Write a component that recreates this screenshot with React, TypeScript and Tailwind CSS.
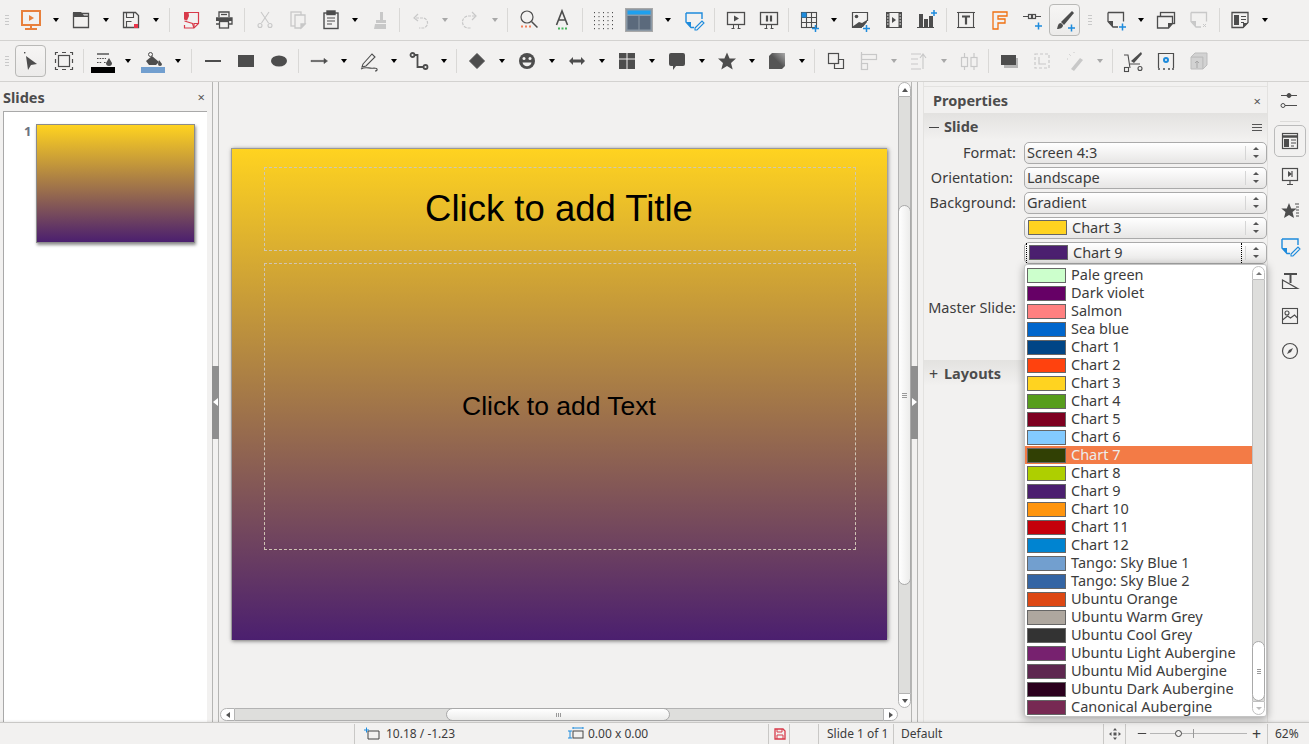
import React from "react";

const D = "#4d4d4d";
const L = "#c8c8c8";
const B = "#1e8bdc";
const icons: Record<string, React.ReactNode> = {
  present: (<g fill="none" stroke="#e8803c" strokeWidth="2"><rect x="3" y="3" width="18" height="14" /><path d="M12 17v3M6 21h12" /><path d="M10 7l5 3-5 3z" fill="#e8803c" stroke="none" /></g>),
  open: (<g><path d="M4.500 5.500h15v14h-15z" fill="none" stroke={D} strokeWidth="1.300" /><path d="M4 4h8l3 3.500h5V9H4z" fill={D} /></g>),
  save: (<g><path d="M4.500 4.500h12l3 3v12h-15z" fill="none" stroke={D} strokeWidth="1.300" /><path d="M7.500 4.500v5h7v-5M7.500 19.500v-6h5" fill="none" stroke={D} strokeWidth="1.100" /><rect x="15" y="16" width="4" height="4" fill="#e8354a" /></g>),
  pdf: (<g fill="none" stroke="#d83a4a" strokeWidth="1.200"><path d="M9 4.500h10.500v11l-4.500 4.500H5.500v-3" /><path d="M5 4h4.500l.5 4-2 4.500-3-1z" fill="#d83a4a" stroke="none" /><path d="M5.500 13l8 2.500 1.500 4.500" /><path d="M15 20v-4.500h4.500" /></g>),
  print: (<g fill="none" stroke={D} strokeWidth="1.300"><path d="M7 9V4h10v5" /><path d="M9 6.500h6" /><path d="M4 10h16v6h-3M7 16H4z" /><path d="M4 10h16v3H4z" fill={D} stroke="none" /><rect x="7.500" y="13.500" width="9" height="6.500" fill="#f2f1f0" /></g>),
  cut: (<g fill="none" stroke={L} strokeWidth="1.100"><path d="M8 4l7.500 11M16 4L8.500 15" /><circle cx="7" cy="17.500" r="2" /><circle cx="17" cy="17.500" r="2" /></g>),
  copy: (<g fill="none" stroke={L} strokeWidth="1.300"><rect x="5" y="4" width="10" height="14" /><path d="M9 7h10v9l-4 4H9z" fill="#f2f1f0" /><path d="M15 20v-4h4z" fill={L} /></g>),
  paste: (<g fill="none" stroke={D} strokeWidth="1.400"><rect x="5" y="5" width="14" height="15.500" /><rect x="8" y="3" width="8" height="3.500" fill={D} /><path d="M8 10h8M8 13h8M8 16h5" strokeWidth="1.200" /></g>),
  clone: (<g fill={L}><rect x="13" y="4" width="3" height="8" /><path d="M9 12h10v3H9zM8 16h11v5H7z" /></g>),
  undo: (<g fill="none" stroke={L} strokeWidth="1.200"><path d="M8 10h6a5 5 0 0 1 1 10h-4" strokeDasharray="3 1" /><path d="M10 6L6 10l4 3" /></g>),
  redo: (<g fill="none" stroke={L} strokeWidth="1.200"><path d="M17 8h-6a6 6 0 0 0-1 12h3" strokeDasharray="3 1" /><path d="M14 4l4 4-4 4" /></g>),
  find: (<g fill="none" stroke={D} strokeWidth="1.200"><circle cx="10" cy="9" r="6" /><path d="M14.500 13.500L20.500 19.500" strokeWidth="1.500" /><path d="M4 18.500h2M8 18.500h2M12 18.500h2" stroke="#f0805a" strokeWidth="1.800" /></g>),
  spell: (<g fill="none" stroke={D} strokeWidth="1.600"><path d="M6.500 17l5.500-14 5.500 14M8.500 12h7" /><path d="M8 20.500h2M11.500 20.500h2M15 20.500h2" stroke="#45b45a" strokeWidth="1.800" /></g>),
  grid: (<g fill={D}>{[3, 7.500, 12, 16.500, 21].flatMap((x) => [4, 8, 12, 16, 20].map((y) => <rect key={x + "-" + y} x={x} y={y} width="1" height="1.200" />))}</g>),
  layoutBig: (<g><rect x="0.500" y="0.500" width="27" height="23" fill="#8c99a5" stroke="#a9a9a9" /><rect x="2.500" y="2.500" width="23" height="4" fill="#1ea0ee" /><rect x="2.500" y="8" width="11" height="13.500" fill="#5b6a7c" /><rect x="14.500" y="8" width="11" height="13.500" fill="#5b6a7c" /></g>),
  note: (<g fill="none" stroke={B} strokeWidth="1.400"><path d="M4 5h16v6M4 5v9l5 5.500h3" /><path d="M4 14h5v5.500z" fill={B} stroke="none" /><path d="M13 20l7-7 2 2-7 7h-2z" strokeWidth="1.100" /></g>),
  start: (<g fill="none" stroke={D} strokeWidth="1.300"><rect x="3.500" y="4.500" width="17" height="12" /><path d="M10 7.500l5 3-5 3z" fill={D} stroke="none" /><path d="M9.500 17v3M14.500 17v3M7.500 20.500h3M13.500 20.500h3" strokeWidth="1" /></g>),
  pause: (<g fill="none" stroke={D} strokeWidth="1.300"><rect x="3.500" y="4.500" width="17" height="12" /><path d="M10 7.500v6M14 7.500v6" strokeWidth="2.200" /><path d="M9.500 17v3M14.500 17v3M7.500 20.500h3M13.500 20.500h3" strokeWidth="1" /></g>),
  table: (<g fill="none" stroke={D} strokeWidth="1.100"><rect x="4.500" y="4.500" width="15" height="15" /><path d="M4.500 9.500h15M4.500 14.500h15M9.500 4.500v15M14.500 4.500v15" /><rect x="4.500" y="4.500" width="5" height="5" fill={B} stroke="none" /><path d="M15 20.500h7M18.500 17v7" stroke={B} strokeWidth="1.500" /></g>),
  image: (<g fill="none" stroke={D} strokeWidth="1.200"><path d="M14 19.500H4.500v-15h15V13" /><circle cx="8.500" cy="8.500" r="1.800" fill={D} stroke="none" /><path d="M4 19l7-5 3 1 5-3v2l-4 5z" fill={D} stroke="none" /><path d="M15 20.500h7M18.500 17v7" stroke={B} strokeWidth="1.500" /></g>),
  video: (<g><rect x="4" y="4" width="16" height="16" fill={D} /><rect x="7.500" y="5" width="9" height="14" fill="#f2f1f0" /><path d="M10 9l4 3-4 3z" fill={D} /><path d="M5 7h1.500M5 10h1.500M5 13h1.500M5 16h1.500M17.500 7H19M17.500 10H19M17.500 13H19M17.500 16H19" stroke="#f2f1f0" /></g>),
  chart: (<g><rect x="4" y="6" width="4" height="13" fill={D} /><rect x="9" y="11" width="4" height="8" fill={D} /><rect x="14" y="8" width="4" height="11" fill={D} /><path d="M2 19.500h17" stroke={D} /><path d="M16 5h6M19 2v6" stroke={B} strokeWidth="1.500" /></g>),
  text: (<g fill="none" stroke={D} strokeWidth="1.100"><rect x="4.500" y="4.500" width="15" height="15" /><path d="M8 8.500h8M12 8.500v8" strokeWidth="2.200" /><path d="M3 4.500h3M18 4.500h3M3 19.500h3M18 19.500h3" /></g>),
  fontwork: (<path d="M6 4h14v4h-9v3h7v4h-7v6H6z" fill="none" stroke="#f07010" strokeWidth="1.300" />),
  link: (<g fill="none" stroke={D} strokeWidth="1.200"><rect x="8.500" y="6.500" width="3" height="4" /><rect x="12.500" y="6.500" width="3" height="4" /><path d="M3 8.500h5M16 8.500h5" /><path d="M15 18h7M18.500 14.500v7" stroke={B} strokeWidth="1.500" /></g>),
  brush: (<g><path d="M8 14L19 3l2 2-10 12z" fill={D} /><path d="M4 21c1-3 1-6 4-6l2 2c0 3-3 4-6 4z" fill={D} /><path d="M15 20h7M18.500 16.500v7" stroke={B} strokeWidth="1.500" /></g>),
  slideNew: (<g fill="none" stroke={D} strokeWidth="1.300"><path d="M4 4.500h15.500v9M4 4.500v9l5 5.500h5" /><path d="M4 13h5v6z" fill={D} stroke="none" /><path d="M15 19h7M18.500 15.500v7" stroke={B} strokeWidth="1.500" /></g>),
  slideDup: (<g fill="none" stroke={D} strokeWidth="1.300"><rect x="6.500" y="4.500" width="14" height="11" /><path d="M3.500 8.500h15v7l-4 4.500h-11z" fill="#f2f1f0" /><path d="M14 20v-5h5z" fill={D} stroke="none" /></g>),
  slideDel: (<g fill="none" stroke={L} strokeWidth="1.300"><path d="M4 4.500h15.500v9M4 4.500v9l5 5.500h5" /><path d="M4 13h5v6z" fill={L} stroke="none" /><path d="M16 16l3 3M19 16l-3 3" strokeWidth="1" /></g>),
  slideLay: (<g fill="none" stroke={D} strokeWidth="1.300"><path d="M4 4.500h16v10l-5 5H4z" /><rect x="6" y="7" width="5" height="10" fill={D} stroke="none" /><path d="M13 8.500h5M13 11.500h5M13 14.500h3" strokeWidth="1.200" /><path d="M15 20v-5h5z" fill={D} stroke="none" /></g>),
  select: (<g><path d="M7 7l11 8-6 1-3 5z" fill={D} /><rect x="5" y="3" width="1.400" height="1.400" fill={D} /></g>),
  points: (<g fill="none" stroke={D} strokeWidth="1.200"><rect x="6.500" y="6.500" width="11" height="11" /><path d="M3.500 6V3.500H6M18 3.500h2.500V6M3.500 18v2.500H6M18 20.500h2.500V18M10 3.500h4M10 20.500h4M3.500 10v4M20.500 10v4" /></g>),
  lineColor: (<g><path d="M6 5h12" stroke={D} strokeWidth="1.400" /><path d="M6 9.500h9M6 13.500h5M13 13.500h2" stroke={D} strokeDasharray="1.600 1" strokeWidth="1.200" /><path d="M18 9l3 5a3 3 0 1 1-6 0z" fill={D} /><rect x="0" y="18" width="24" height="6" fill="#000" /></g>),
  fillColor: (<g><path d="M5 12l6-5 7 6-3 3H8z" fill={D} /><circle cx="9.500" cy="5.500" r="2" fill="none" stroke={D} /><path d="M18 11l3 4a2 2 0 1 1-4 0z" fill={D} /><rect x="0" y="18" width="24" height="6" fill="#729fcf" /></g>),
  line: (<path d="M4 12h16" stroke={D} strokeWidth="2" />),
  rect: (<rect x="4" y="6" width="16" height="12" fill={D} />),
  ellipse: (<ellipse cx="12" cy="12" rx="8" ry="5.500" fill={D} />),
  arrow: (<path d="M4 11.400h13v-2l3.500 2.600-3.500 2.600v-2H4z" fill={D} stroke={D} strokeWidth=".6" />),
  pencil: (<g fill="none" stroke={D} strokeWidth="1.100"><path d="M6 15L15 5l3 3-9 9-4 1z" /><path d="M4 20c5-3 8 0 13-1 4 0 4 3 1 3" /></g>),
  connector: (<g fill="none" stroke={D} strokeWidth="1.800"><circle cx="5.500" cy="6" r="2" /><circle cx="18.500" cy="18" r="2" /><path d="M7.500 6h3v12h6" /></g>),
  diamond: (<path d="M12 4.500l7.500 7.500-7.500 7.500L4.500 12z" fill={D} stroke={D} strokeLinejoin="round" />),
  smile: (<g><circle cx="12" cy="12" r="8" fill={D} /><circle cx="9" cy="9.500" r="1.500" fill="#f2f1f0" /><circle cx="15" cy="9.500" r="1.500" fill="#f2f1f0" /><path d="M7.500 13.500h9c-1 5-8 5-9 0z" fill="#f2f1f0" /></g>),
  dbl: (<path d="M4 12l4-4v2.500h8V8l4 4-4 4v-2.500H8V16z" fill={D} />),
  flow: (<g fill={D}><rect x="4" y="4" width="7.500" height="5.500" /><rect x="12.500" y="4" width="7.500" height="5.500" /><rect x="4" y="10.500" width="7.500" height="9.500" /><rect x="12.500" y="10.500" width="7.500" height="9.500" /></g>),
  callout: (<path d="M6 4h12a2 2 0 0 1 2 2v9a2 2 0 0 1-2 2h-7l-3 4v-4H6a2 2 0 0 1-2-2V6a2 2 0 0 1 2-2z" fill={D} />),
  star: (<path d="M12 3.500l2.600 6h6.400l-5 4.500 1.700 6.500-5.700-3.500-5.700 3.500L8 14 3 9.500h6.400z" fill={D} />),
  cube: (<g><defs><linearGradient id="cb" x1="0" y1="1" x2="1" y2="0"><stop offset=".5" stopColor="#555" /><stop offset="1" stopColor="#aaa" /></linearGradient></defs><path d="M4 7l3-3h13v13l-3 3H4z" fill="url(#cb)" /></g>),
  trans: (<g fill="none" stroke={D} strokeWidth="1.200"><rect x="4.500" y="4.500" width="10" height="10" /><path d="M14.500 10.500h5v9h-9v-5h4z" /></g>),
  align: (<g fill="none" stroke={L} strokeWidth="1.200"><path d="M4.500 3v18" /><rect x="4.500" y="5.500" width="15" height="5" /><rect x="4.500" y="14.500" width="6" height="6" /></g>),
  arrange: (<g fill="none" stroke={L} strokeWidth="1.100"><path d="M4 5h10M4 10h7M4 15h7M4 20h10" /><path d="M16 20V6M13 9l3-4 3 4" /></g>),
  dist: (<g fill="none" stroke={L} strokeWidth="1.200"><rect x="4.500" y="8.500" width="6" height="9" /><rect x="14" y="8.500" width="6" height="9" /><path d="M7.500 4v4M17 4v4M7.500 18v3M17 18v3" /></g>),
  shadow: (<g><rect x="7" y="9" width="14" height="10" fill="#b5b5b5" /><rect x="4" y="6" width="15" height="10" fill={D} /></g>),
  crop: (<g fill="none" stroke={L} strokeWidth="1.200"><rect x="5" y="5" width="14" height="14" strokeDasharray="3 2" /><path d="M9 8v7h7" /></g>),
  wand: (<g><path d="M8 20l9-11 3 2-9 11z" fill={L} /><path d="M6 5l2 2M11 3v2M4 10h2" stroke={L} strokeDasharray="1 1" /></g>),
  editPts: (<g fill="none" stroke={D} strokeWidth="1.100"><path d="M3 6h4l2 13M9 15h10" /><rect x="3.500" y="18.500" width="4" height="4" /><circle cx="19" cy="19.500" r="2" /><path d="M10 12L20 3l1 2-8 9z" fill={D} stroke="none" /></g>),
  glue: (<g fill="none" stroke={D} strokeWidth="1.200"><path d="M4.500 19V4.500h15V19" /><path d="M4 20h2M9 20h2M14 20h2M18 20h2" strokeWidth="1.500" /><circle cx="12" cy="11" r="2" stroke={B} strokeWidth="2" /></g>),
  extr: (<g fill="#d2d2d2" stroke="#bdbdbd"><path d="M4 8h12v12H4z" /><path d="M4 8l4-4h12v12l-4 4V8z" /><path d="M10 19v-7M8 14l2-2 2 2" fill="none" stroke="#a8a8a8" /></g>),
  setTab: (<g fill="none" stroke={D} strokeWidth="1"><path d="M3 7.500h16M3 17.500h16" /><circle cx="11" cy="7.500" r="2" fill={D} /><circle cx="5" cy="17.500" r="2" fill="#f2f1f0" /></g>),
  propTab: (<g fill="none" stroke={D} strokeWidth="1.200"><rect x="4.500" y="4.500" width="15" height="15" /><path d="M4.500 7.500h15" strokeWidth="2.500" /><rect x="6" y="10" width="5" height="8" fill={D} stroke="none" /><path d="M13 11h5M13 14h5M13 17h3" /></g>),
  transTab: (<g fill="none" stroke={D} strokeWidth="1.200"><rect x="4.500" y="4.500" width="15" height="12" /><path d="M10 7l4 3-4 3z" fill={D} stroke="none" /><path d="M14 7v6" /><path d="M12 17v3M9 20.500h6" /></g>),
  galTab: (<g><path d="M11 4l2.200 5.500h5.500L14.500 13l1.500 6-5-3-5 3 1.500-6-4.200-3.500h5.500z" fill={D} /><path d="M17 5h4M18 8h3M18 11h3M18 14h3M18 17h3" stroke={D} /></g>),
  noteTab: (<g fill="none" stroke={B} strokeWidth="1.400"><path d="M4 5h16v6M4 5v9l5 5.500h3" /><path d="M4 14h5v5.500z" fill={B} stroke="none" /><path d="M13 20l7-7 2 2-7 7h-2z" strokeWidth="1.100" /></g>),
  styleTab: (<g fill="none" stroke={D} strokeWidth="1.200"><path d="M6 5h13M12.500 5v9" strokeWidth="2" /><path d="M4.500 19.500h15L4.500 11z" /></g>),
  picTab: (<g fill="none" stroke={D} strokeWidth="1.100"><rect x="4.500" y="4.500" width="15" height="15" /><circle cx="9" cy="9" r="2" /><path d="M4.500 16l5-4 3 2 4-3 3 3" /></g>),
  navTab: (<g fill="none" stroke={D} strokeWidth="1.200"><circle cx="12" cy="12" r="7.500" /><path d="M9 15l2-4 4-2-2 4z" fill={D} stroke="none" /></g>),
};

function Icon({ n, s = 24 }: { n: string; s?: number }) {
  return (
    <svg width={s} height={24} viewBox={`0 0 ${s} 24`} className="block shrink-0">
      {icons[n]}
    </svg>
  );
}

type Item = { n?: string; w?: string; dd?: string; off?: boolean; a?: boolean; sep?: string; handle?: string; big?: boolean };

const row1: Item[] = [
  { handle: "w-[14px]" },
  { n: "present", dd: "w-[17px]" }, { n: "open", dd: "w-[17px]" }, { n: "save", dd: "w-[17px]" },
  { sep: "w-[10px]" }, { n: "pdf" }, { n: "print" },
  { sep: "w-[8px]" }, { n: "cut" }, { n: "copy" }, { n: "paste", dd: "w-[15px]" }, { n: "clone" },
  { sep: "w-[8px]" }, { n: "undo", dd: "w-[17px]", off: true }, { n: "redo", dd: "w-[17px]", off: true },
  { sep: "w-[9px]" }, { n: "find" }, { n: "spell" },
  { sep: "w-[8px]" }, { n: "grid" }, { n: "layoutBig", w: "w-[40px]", dd: "w-[18px]", big: true }, { n: "note" },
  { sep: "w-[9px]" }, { n: "start" }, { n: "pause" },
  { sep: "w-[7px]" }, { n: "table", dd: "w-[17px]" }, { n: "image", w: "w-[35px]" }, { n: "video" }, { n: "chart" },
  { sep: "w-[6px]" }, { n: "text" }, { n: "fontwork" }, { n: "link" }, { n: "brush", a: true },
  { handle: "w-[18px]" },
  { n: "slideNew", dd: "w-[17px]" }, { n: "slideDup" }, { n: "slideDel" },
  { sep: "w-[8px]" }, { n: "slideLay", dd: "w-[17px]" },
];
const row2: Item[] = [
  { handle: "w-[14px]" },
  { n: "select", a: true }, { n: "points" },
  { sep: "w-[6px]" }, { n: "lineColor", dd: "w-[17px]" }, { n: "fillColor", dd: "w-[17px]" },
  { sep: "w-[10px]" }, { n: "line" }, { n: "rect" }, { n: "ellipse" },
  { sep: "w-[7px]" }, { n: "arrow", dd: "w-[17px]" }, { n: "pencil", dd: "w-[17px]" }, { n: "connector", dd: "w-[17px]" },
  { sep: "w-[8px]" }, { n: "diamond", dd: "w-[17px]" }, { n: "smile", dd: "w-[17px]" }, { n: "dbl", dd: "w-[17px]" }, { n: "flow", dd: "w-[17px]" }, { n: "callout", dd: "w-[17px]" }, { n: "star", dd: "w-[17px]" }, { n: "cube", dd: "w-[17px]" },
  { sep: "w-[9px]" }, { n: "trans" }, { n: "align", dd: "w-[17px]", off: true }, { n: "arrange", dd: "w-[17px]", off: true }, { n: "dist" },
  { sep: "w-[7px]" }, { n: "shadow" }, { n: "crop" }, { n: "wand", dd: "w-[17px]", off: true },
  { sep: "w-[8px]" }, { n: "editPts" }, { n: "glue" }, { n: "extr" },
];

function Handle({ w }: { w: string }) {
  return (
    <div className={`${w} h-full flex flex-col items-center justify-center gap-[2px] shrink-0`}>
      <div className="w-[4px] h-px bg-[#c9c9c9]" />
      <div className="w-[4px] h-px bg-[#c9c9c9]" />
      <div className="w-[4px] h-px bg-[#c9c9c9]" />
      <div className="w-[4px] h-px bg-[#c9c9c9]" />
    </div>
  );
}

function Caret({ off, w = "w-[17px]" }: { off?: boolean; w?: string }) {
  return (
    <div className={`${w} shrink-0 flex items-center justify-center`}>
      <div className={`w-0 h-0 border-x-[3.5px] border-x-transparent border-t-[4px] ${off ? "border-t-[#a8a8a8]" : "border-t-black"}`} />
    </div>
  );
}

function Toolbar({ items }: { items: Item[] }) {
  return (
    <div className="h-[41px] flex items-center border-b border-[#d3d2d0] shrink-0 bg-[#f2f1f0]">
      {items.map((it, i) => {
        if (it.handle) return <Handle key={i} w={it.handle} />;
        if (it.sep)
          return (
            <div key={i} className={`${it.sep} h-[24px] flex justify-center shrink-0`}>
              <div className="w-px h-full bg-[#d9d8d6]" />
            </div>
          );
        return (
          <React.Fragment key={i}>
            <div className={`${it.w ?? "w-[33px]"} h-[32px] flex items-center justify-center shrink-0`}>
              <div className={it.a ? "w-[31px] h-[32px] flex items-center justify-center rounded-[4px] border border-[#b9b9b7] bg-gradient-to-b from-[#f6f5f4] to-[#ecebea]" : "flex items-center justify-center"}>
                <Icon n={it.n!} s={it.big ? 28 : 24} />
              </div>
            </div>
            {it.dd && <Caret off={it.off} w={it.dd} />}
          </React.Fragment>
        );
      })}
    </div>
  );
}

function VScroll() {
  return (
    <div className="w-[13px] flex flex-col shrink-0">
      <div className="h-[15px] rounded-t-full border border-[#b3b3b3] bg-white flex items-center justify-center shrink-0">
        <div className="w-0 h-0 border-x-[3px] border-x-transparent border-b-[4px] border-b-[#555]" />
      </div>
      <div className="flex-1 flex flex-col bg-[#dededc] border-x border-[#b3b3b3]">
        <div className="h-[108px]" />
        <div className="h-[380px] -mx-px rounded-full border border-[#a9a9a9] bg-gradient-to-r from-white to-[#ececeb] flex flex-col items-center justify-center gap-px">
          <div className="w-[5px] h-px bg-[#999]" />
          <div className="w-[5px] h-px bg-[#999]" />
          <div className="w-[5px] h-px bg-[#999]" />
        </div>
        <div className="flex-1" />
      </div>
      <div className="h-[15px] rounded-b-full border border-[#b3b3b3] bg-white flex items-center justify-center shrink-0">
        <div className="w-0 h-0 border-x-[3px] border-x-transparent border-t-[4px] border-t-[#555]" />
      </div>
    </div>
  );
}

function HScroll() {
  return (
    <div className="h-[13px] flex shrink-0 mb-px mr-[13px]">
      <div className="w-[15px] rounded-l-full border border-[#b3b3b3] bg-white flex items-center justify-center shrink-0">
        <div className="w-0 h-0 border-y-[3px] border-y-transparent border-r-[4px] border-r-[#555]" />
      </div>
      <div className="flex-1 flex bg-[#dededc] border-y border-[#b3b3b3]">
        <div className="w-[211px]" />
        <div className="w-[224px] -my-px rounded-full border border-[#a9a9a9] bg-gradient-to-b from-white to-[#ececeb] flex items-center justify-center gap-px">
          <div className="w-px h-[4px] bg-[#999]" />
          <div className="w-px h-[4px] bg-[#999]" />
          <div className="w-px h-[4px] bg-[#999]" />
        </div>
        <div className="flex-1" />
      </div>
      <div className="w-[15px] rounded-r-full border border-[#b3b3b3] bg-white flex items-center justify-center shrink-0">
        <div className="w-0 h-0 border-y-[3px] border-y-transparent border-l-[4px] border-l-[#555]" />
      </div>
    </div>
  );
}

function Splitter({ dir }: { dir: "l" | "r" }) {
  return (
    <div className="w-[7px] h-full flex flex-col justify-center shrink-0 border-x border-[#b5b5b3]">
      <div className="h-[73px] -mx-px bg-[#8f8f8f] flex items-center justify-center">
        <div className={dir === "l" ? "w-0 h-0 border-y-[4px] border-y-transparent border-r-[5px] border-r-white" : "w-0 h-0 border-y-[4px] border-y-transparent border-l-[5px] border-l-white"} />
      </div>
    </div>
  );
}

function Spin() {
  return (
    <div className="w-[22px] h-full flex justify-end shrink-0">
      <div className="w-[21px] flex flex-col items-center justify-center gap-[5px] border-l border-[#d5d5d5] my-[3px]">
        <div className="w-0 h-0 border-x-[3px] border-x-transparent border-b-[3px] border-b-[#555]" />
        <div className="w-0 h-0 border-x-[3px] border-x-transparent border-t-[3px] border-t-[#555]" />
      </div>
    </div>
  );
}

function Control({ children, focus }: { children: React.ReactNode; focus?: boolean }) {
  return (
    <div className="w-[243px] h-[22px] rounded-[5px] border border-[#aaa] bg-gradient-to-b from-white to-[#e7e6e5] flex items-center shrink-0">
      <div className={focus ? "flex-1 h-full flex items-center pl-[2px] min-w-0 border-x border-dotted border-black ml-[1px] mr-[2px]" : "flex-1 h-full flex items-center pl-[2px] min-w-0 ml-[1px] mr-[2px]"}>{children}</div>
      <Spin />
    </div>
  );
}

function FormRow({ label, children, focus, pr = "pr-[8px]" }: { label?: string; children: React.ReactNode; focus?: boolean; pr?: string }) {
  return (
    <div className="h-[25px] flex items-center">
      <div className={`w-[100px] ${pr} flex justify-end whitespace-nowrap shrink-0`}>{label}</div>
      <Control focus={focus}>{children}</Control>
    </div>
  );
}

const colors: [string, string][] = [
  ["Pale green", "#ccffcc"], ["Dark violet", "#660066"], ["Salmon", "#ff8080"], ["Sea blue", "#0066cc"],
  ["Chart 1", "#004586"], ["Chart 2", "#ff420e"], ["Chart 3", "#ffd320"], ["Chart 4", "#579d1c"],
  ["Chart 5", "#7e0021"], ["Chart 6", "#83caff"], ["Chart 7", "#314004"], ["Chart 8", "#aecf00"],
  ["Chart 9", "#4b1f6f"], ["Chart 10", "#ff950e"], ["Chart 11", "#c5000b"], ["Chart 12", "#0084d1"],
  ["Tango: Sky Blue 1", "#729fcf"], ["Tango: Sky Blue 2", "#3465a4"], ["Ubuntu Orange", "#dd4814"],
  ["Ubuntu Warm Grey", "#aea79f"], ["Ubuntu Cool Grey", "#333333"], ["Ubuntu Light Aubergine", "#77216f"],
  ["Ubuntu Mid Aubergine", "#5e2750"], ["Ubuntu Dark Aubergine", "#2c001e"], ["Canonical Aubergine", "#772953"],
];

function Swatch({ c }: { c: string }) {
  return <div className="w-[39px] h-[15px] border border-[#666] shrink-0" style={{ backgroundColor: c }} />;
}

function Popup() {
  return (
    <div className="absolute left-[1024px] top-[264px] w-[243px] h-[453px] bg-white border border-[#c4c4c4] rounded-[3px] shadow-[0_2px_8px_rgba(0,0,0,0.35)] flex z-10">
      <div className="flex-1 min-w-0 pt-px">
        {colors.map(([t, c]) => (
          <div key={t} className={t === "Chart 7" ? "h-[18px] flex items-center pl-[2px] bg-[#f37b46] text-[#ececec]" : "h-[18px] flex items-center pl-[2px]"}>
            <Swatch c={c} />
            <span className="ml-[5px] whitespace-nowrap">{t}</span>
          </div>
        ))}
      </div>
      <div className="w-[13px] flex flex-col shrink-0 mr-px my-px">
        <div className="h-[14px] rounded-t-full border border-[#c0c0c0] bg-white flex items-center justify-center shrink-0">
          <div className="w-0 h-0 border-x-[3px] border-x-transparent border-b-[3px] border-b-[#777]" />
        </div>
        <div className="flex-1 flex flex-col bg-[#dededc] border-x border-[#c0c0c0]">
          <div className="flex-1" />
          <div className="h-[60px] -mx-px rounded-full border border-[#a9a9a9] bg-white flex flex-col items-center justify-center gap-px">
            <div className="w-[4px] h-px bg-[#999]" />
            <div className="w-[4px] h-px bg-[#999]" />
            <div className="w-[4px] h-px bg-[#999]" />
          </div>
        </div>
        <div className="h-[14px] rounded-b-full border border-[#c0c0c0] bg-white flex items-center justify-center shrink-0">
          <div className="w-0 h-0 border-x-[3px] border-x-transparent border-t-[3px] border-t-[#bbb]" />
        </div>
      </div>
    </div>
  );
}

function Sep() {
  return <div className="w-px h-[20px] bg-[#c9c8c6] shrink-0" />;
}

const grad = "bg-linear-to-b/srgb from-[#ffd320] to-[#4b1f6f]";

export default function App() {
  return (
    <div className="relative w-[1309px] h-[744px] overflow-hidden bg-[#f2f1f0] text-[#3c3c3c] text-[14.5px] flex flex-col font-['Noto_Sans',sans-serif]">
      <Toolbar items={row1} />
      <Toolbar items={row2} />
      <div className="flex-1 flex min-h-0">
        {/* Slides panel */}
        <div className="w-[212px] flex flex-col shrink-0 pl-[3px] pr-[5px]">
          <div className="h-[29px] flex items-center justify-between shrink-0 pr-[2px] pt-[2px]">
            <span className="font-bold text-[#4c4c4c]">Slides</span>
            <span className="text-[13px] text-[#555] leading-none">×</span>
          </div>
          <div className="flex-1 bg-white border-t border-l border-[#a9a9a9] flex items-start pt-[12px] pl-[20px] gap-[4px]">
            <span className="font-bold text-[13px] text-[#6b7280] leading-[14px] w-[8px]">1</span>
            <div className={`w-[159px] h-[119px] ${grad} border border-[#8c8c8c] shadow-[1px_2px_3px_rgba(0,0,0,0.45)]`} />
          </div>
        </div>
        <Splitter dir="l" />
        {/* Canvas */}
        <div className="flex-1 flex flex-col min-w-0 ml-px">
          <div className="flex-1 flex min-h-0">
            <div className="flex-1 pl-[11px] pt-[66px] min-w-0">
              <div className={`w-[656px] h-[492px] ${grad} border-l border-t border-[#999] shadow-[1px_1px_4px_rgba(0,0,0,0.55)] pt-[18px] pl-[32px] flex flex-col font-['Liberation_Sans',sans-serif] text-black`}>
                <div className="w-[592px] h-[84px] border border-dashed border-[#cfc8b4] flex items-center justify-center text-[36.5px] pr-[2px]">
                  Click to add Title
                </div>
                <div className="w-[592px] h-[287px] mt-[12px] border border-dashed border-[#cfc4b4] flex items-center justify-center text-[26.5px] pr-[2px]">
                  Click to add Text
                </div>
              </div>
            </div>
            <VScroll />
          </div>
          <HScroll />
        </div>
        <Splitter dir="r" />
        {/* Properties */}
        <div className="w-[345px] ml-[5px] mr-[41px] pt-[4px] flex flex-col shrink-0 border-x border-[#e3e2e0]">
          <div className="h-[27px] flex items-center justify-between pl-[9px] pr-[6px] pt-[2px] shrink-0 border-t border-[#e3e2e0]">
            <span className="font-bold text-[#4c4c4c]">Properties</span>
            <span className="text-[13px] text-[#555] leading-none">×</span>
          </div>
          <div className="h-[27px] flex items-center pl-[5px] pr-[5px] pt-px shrink-0 bg-gradient-to-b from-[#e3e2e0] to-[#f2f1f0]">
            <span className="w-[10px] h-px bg-[#444]" />
            <span className="ml-[5px] font-bold text-[#4c4c4c] flex-1">Slide</span>
            <span className="w-[10px] flex flex-col gap-[2px]">
              <span className="h-px bg-[#555]" />
              <span className="h-px bg-[#555]" />
              <span className="h-px bg-[#555]" />
            </span>
          </div>
          <div className="h-[220px] shrink-0">
            <FormRow label="Format:"><span className="-ml-px">Screen 4:3</span></FormRow>
            <FormRow label="Orientation:" pr="pr-[11px]"><span className="-ml-px">Landscape</span></FormRow>
            <FormRow label="Background:"><span className="-ml-px">Gradient</span></FormRow>
            <FormRow>
              <Swatch c="#ffd320" />
              <span className="ml-[5px]">Chart 3</span>
            </FormRow>
            <FormRow focus>
              <Swatch c="#4b1f6f" />
              <span className="ml-[5px]">Chart 9</span>
            </FormRow>
            <div className="h-[30px]" />
            <div className="h-[25px] flex items-center">
              <div className="w-[100px] pr-[8px] flex justify-end whitespace-nowrap">Master Slide:</div>
            </div>
          </div>
          <div className="h-[26px] flex items-center pl-[5px] pt-[2px] shrink-0 bg-gradient-to-b from-[#e3e2e0] to-[#f2f1f0]">
            <span className="text-[16px] leading-none text-[#444] w-[10px]">+</span>
            <span className="ml-[5px] font-bold text-[#4c4c4c]">Layouts</span>
          </div>
        </div>
      </div>
      {/* tabs overlay column */}
      <div className="absolute left-[1270px] top-[88px] w-[39px] flex flex-col items-center">
        <div className="h-[24px] flex items-center"><Icon n="setTab" /></div>
        <div className="w-[20px] h-px bg-[#dcdbd9] mt-[9px]" />
        <div className="w-[32px] h-[32px] mt-[3px] rounded-[5px] border border-[#bbb] flex items-center justify-center"><Icon n="propTab" /></div>
        <div className="h-[24px] mt-[7px] flex items-center"><Icon n="transTab" /></div>
        <div className="h-[24px] mt-[11px] flex items-center"><Icon n="galTab" /></div>
        <div className="h-[24px] mt-[11px] flex items-center"><Icon n="noteTab" /></div>
        <div className="h-[24px] mt-[11px] flex items-center"><Icon n="styleTab" /></div>
        <div className="h-[24px] mt-[11px] flex items-center"><Icon n="picTab" /></div>
        <div className="h-[24px] mt-[11px] flex items-center"><Icon n="navTab" /></div>
      </div>
      <Popup />
      {/* Status bar */}
      <div className="h-[22px] border-t border-[#c9c8c6] shadow-[0_-1px_2px_rgba(0,0,0,0.08)] flex items-center text-[12px] shrink-0">
        <div className="w-[354px] shrink-0" />
        <Sep />
        <div className="w-[213px] shrink-0 flex items-center pl-[9px] gap-[6px]">
          <svg width="16" height="14" viewBox="0 0 16 14"><path d="M4 4h11v8H4z" fill="none" stroke="#444" /><path d="M0 3h5M2.500 .5v5" stroke={B} /></svg>
          <span>10.18 / -1.23</span>
        </div>
        <div className="w-[200px] shrink-0 flex items-center gap-[4px]">
          <svg width="16" height="14" viewBox="0 0 16 14"><rect x="5" y="4" width="10" height="7" fill="none" stroke="#444" /><path d="M5 1h10M5 0v2M15 0v2M2 4v7M0 4h4M0 11h4" stroke={B} /></svg>
          <span>0.00 x 0.00</span>
        </div>
        <Sep />
        <div className="w-[20px] shrink-0 flex items-center justify-start pl-[5px]">
          <svg width="12" height="12" viewBox="0 0 12 12"><path d="M1 1h8l2 2v8H1z" fill="none" stroke="#d83a4a" strokeWidth="1.300" /><path d="M3 1v3h5V1M3 11V7h6v4" fill="none" stroke="#d83a4a" /></svg>
        </div>
        <Sep />
        <div className="w-[28px] shrink-0" />
        <Sep />
        <div className="w-[74px] shrink-0 pl-[8px] whitespace-nowrap">Slide 1 of 1</div>
        <Sep />
        <div className="w-[209px] shrink-0 pl-[7px]">Default</div>
        <Sep />
        <div className="w-[21px] shrink-0 flex justify-center">
          <svg width="12" height="12" viewBox="0 0 12 12" fill="#555"><rect x="4.500" y="4.500" width="3" height="3" /><path d="M6 0l2 2.500H4zM6 12l2-2.500H4zM0 6l2.500-2v4zM12 6L9.500 4v4z" /></svg>
        </div>
        <Sep />
        <div className="w-[141px] shrink-0 flex items-center">
          <div className="w-[14px] h-px bg-[#444] ml-[9px] shrink-0 scale-x-[0.6]" />
          <div className="ml-[1px] w-[97px] h-px bg-[#b5b5b5] shrink-0 flex items-center">
            <div className="w-[7px] h-[7px] ml-[25px] rounded-full border border-[#444] bg-[#f2f1f0] shrink-0" />
            <div className="w-px h-[9px] bg-[#999] ml-[11px] shrink-0" />
          </div>
          <span className="ml-[5px] text-[16px] leading-none">+</span>
        </div>
        <Sep />
        <div className="pl-[7px]">62%</div>
      </div>
    </div>
  );
}
